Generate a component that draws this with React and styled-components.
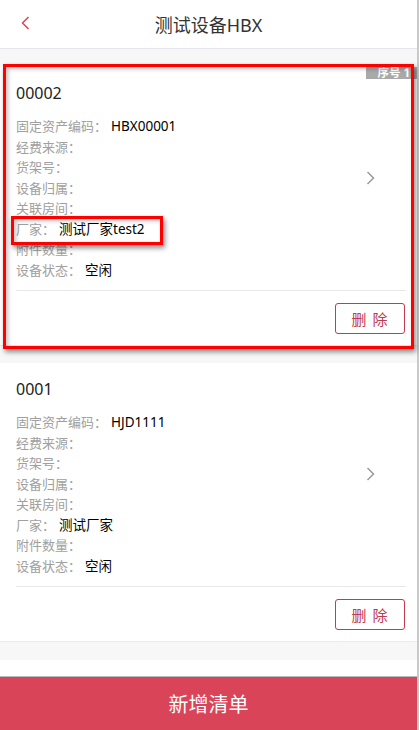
import React from "react";
import styled, { createGlobalStyle } from "styled-components";

const GlobalStyle = createGlobalStyle`
  html, body {
    margin: 0;
    padding: 0;
    background: #ffffff;
    font-family: "Noto Sans", "Noto Sans CJK SC", sans-serif;
  }
  * { box-sizing: border-box; }
`;

// 전체 페이지
const Page = styled.div`
  height: 100vh;
  display: flex;
  flex-direction: column;
  border-right: 2px solid #c9c9c9;
  background: #fff;
  overflow: hidden;
`;

const Header = styled.div`
  height: 49px;
  flex: none;
  display: flex;
  align-items: center;
  justify-content: center;
  position: relative;
  border-bottom: 1px solid #e6e6ec;
  color: #333;
  font-size: 18px;
`;

const BackBtn = styled.span`
  position: absolute;
  left: 21px;
  top: 16px;
  display: flex;
`;

const Body = styled.div`
  flex: 1;
  overflow: hidden;
`;

const List = styled.div`
  background: #f7f7f7;
  padding: 18px 0 18px;
  display: flex;
  flex-direction: column;
  gap: 17px;
`;

const Card = styled.div`
  position: relative;
  background: #fff;
  height: 279px;
  padding: 0 12px 0 16px;
  display: flex;
  flex-direction: column;
  border-bottom: 1px solid #ebebeb;
`;

const Badge = styled.div`
  position: absolute;
  top: 0;
  right: 0;
  width: 51px;
  height: 12px;
  background: #a9a9a9;
  color: #fff;
  font-size: 11.5px;
  line-height: 12px;
  text-align: right;
  padding-right: 7px;
  font-weight: bold;
  white-space: nowrap;
`;

const Main = styled.div`
  display: flex;
  align-items: center;
  height: 224px;
  border-bottom: 1px solid #e8e8e8;
  margin-right: -1px;
`;

const Info = styled.div`
  flex: 1;
  padding-top: 16px;
  align-self: flex-start;
`;

const Code = styled.div`
  font-size: 16px;
  color: #222;
  line-height: 20px;
  margin-bottom: 13px;
`;

const Row = styled.div`
  font-size: 13px;
  line-height: 20.5px;
  height: 20.5px;
  color: #a0a0a0;
  white-space: nowrap;
`;

const Value = styled.span`
  color: #000;
  margin-left: 4px;
  font-size: 13.5px;
`;

const Arrow = styled.span`
  display: flex;
  margin-right: 31px;
  margin-top: -2px;
`;

const Actions = styled.div`
  display: flex;
  justify-content: flex-end;
  padding-top: 12px;
`;

const DelBtn = styled.button`
  width: 70px;
  height: 31px;
  border: 1px solid #c73a4e;
  border-radius: 3px;
  background: #fff;
  color: #c0394e;
  font-family: inherit;
  font-size: 15px;
  letter-spacing: 1px;
  padding: 0;
`;

const Footer = styled.button`
  flex: none;
  height: 54px;
  border: none;
  border-top: 1px solid #b9b9b9;
  background: #d94459;
  color: #fff;
  font-family: inherit;
  font-size: 20px;
  margin-top: 16px;
  width: 100%;
`;

// 스크린샷 위 표시용 빨간 박스
const Mark = styled.div`
  position: absolute;
  left: ${(p) => p.$l}px;
  top: ${(p) => p.$t}px;
  width: ${(p) => p.$w}px;
  height: ${(p) => p.$h}px;
  border: 3px solid #ff0000;
  box-shadow: 2px 3px 5px rgba(0, 0, 0, 0.45), inset 2px 2px 4px rgba(0, 0, 0, 0.25);
  pointer-events: none;
`;

const Chevron = ({ color, dir }) => (
  <svg width="9" height="14" viewBox="0 0 9 14">
    <path
      d={dir === "left" ? "M7.5 1 L1.5 7 L7.5 13" : "M1.5 1 L7.5 7 L1.5 13"}
      fill="none"
      stroke={color}
      strokeWidth="1.5"
    />
  </svg>
);

const devices = [
  {
    code: "00002",
    no: 1,
    asset: "HBX00001",
    maker: "测试厂家test2",
    state: "空闲",
  },
  {
    code: "0001",
    asset: "HJD1111",
    maker: "测试厂家",
    state: "空闲",
  },
];

const DeviceCard = ({ d }) => (
  <Card>
    {d.no && <Badge>序号 {d.no}</Badge>}
    <Main>
      <Info>
        <Code>{d.code}</Code>
        <Row>
          固定资产编码：<Value>{d.asset}</Value>
        </Row>
        <Row>经费来源：</Row>
        <Row>货架号：</Row>
        <Row>设备归属：</Row>
        <Row>关联房间：</Row>
        <Row>
          厂家：<Value>{d.maker}</Value>
        </Row>
        <Row>附件数量：</Row>
        <Row>
          设备状态：<Value>{d.state}</Value>
        </Row>
      </Info>
      <Arrow>
        <Chevron color="#9a9a9a" dir="right" />
      </Arrow>
    </Main>
    <Actions>
      <DelBtn>删 除</DelBtn>
    </Actions>
  </Card>
);

export default function App() {
  return (
    <>
      <GlobalStyle />
      <Page>
        <Header>
          <BackBtn>
            <Chevron color="#d94459" dir="left" />
          </BackBtn>
          测试设备HBX
        </Header>
        <Body>
          <List>
            {devices.map((d) => (
              <DeviceCard key={d.code} d={d} />
            ))}
          </List>
        </Body>
        <Footer>新增清单</Footer>
      </Page>
      <Mark $l={3} $t={64} $w={411} $h={285} />
      <Mark $l={11} $t={216} $w={152} $h={29} />
    </>
  );
}
